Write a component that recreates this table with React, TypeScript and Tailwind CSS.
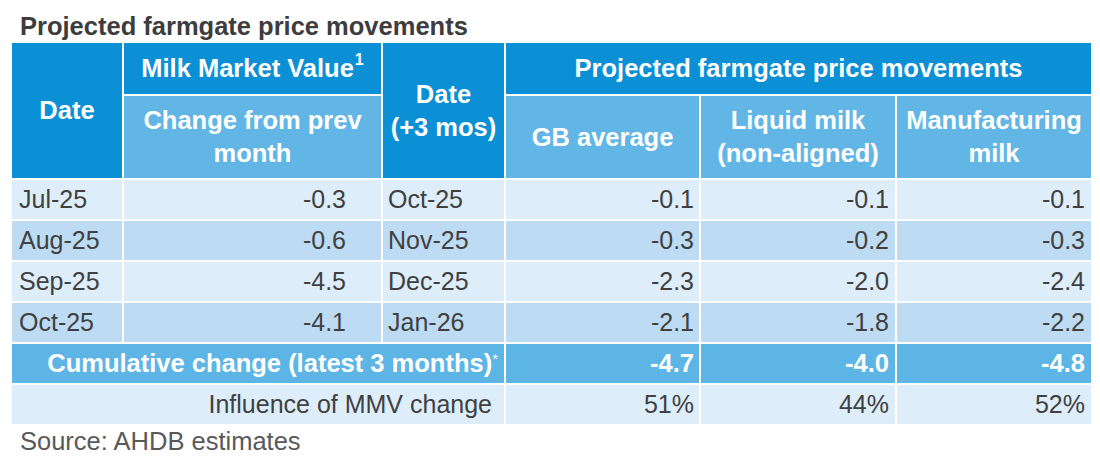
const rows = [
  { d: "Jul-25", mmv: "-0.3", d3: "Oct-25", gb: "-0.1", liq: "-0.1", man: "-0.1" },
  { d: "Aug-25", mmv: "-0.6", d3: "Nov-25", gb: "-0.3", liq: "-0.2", man: "-0.3" },
  { d: "Sep-25", mmv: "-4.5", d3: "Dec-25", gb: "-2.3", liq: "-2.0", man: "-2.4" },
  { d: "Oct-25", mmv: "-4.1", d3: "Jan-26", gb: "-2.1", liq: "-1.8", man: "-2.2" },
];

export default function App() {
  return (
    <div
      className="w-[1100px] h-[460px] bg-white pl-[12px] pt-[12px] text-[#404040]"
      style={{ fontFamily: '"Liberation Sans", Arial, sans-serif' }}
    >
      <h1 className="pl-[8px] text-[25.5px] leading-[29px] font-bold text-[#3d3d3d]">
        Projected farmgate price movements
      </h1>

      <div className="mt-[2px] grid w-[1079px] grid-cols-[110px_257px_121px_193px_194px_194px] grid-rows-[51px_82px_repeat(6,39px)] gap-[2px] bg-white text-[25px]">
        {/* header */}
        <div className="row-span-2 flex items-center justify-center bg-[#0b8fd5] text-[25.5px] font-bold text-white">
          Date
        </div>
        <div className="flex items-center justify-center bg-[#0b8fd5] text-[25.5px] font-bold text-white">
          <span>
            Milk Market Value
            <span className="relative -top-[12px] ml-[1px] text-[16px]">1</span>
          </span>
        </div>
        <div className="row-span-2 flex items-center justify-center bg-[#0b8fd5] text-center text-[25.5px] font-bold leading-[33px] text-white">
          Date
          <br />
          (+3 mos)
        </div>
        <div className="col-span-3 flex items-center justify-center bg-[#0b8fd5] text-[25.5px] font-bold text-white">
          Projected farmgate price movements
        </div>
        <div className="flex items-center justify-center bg-[#62b6e6] text-center text-[25.5px] font-bold leading-[33px] text-white">
          Change from prev
          <br />
          month
        </div>
        <div className="flex items-center justify-center bg-[#62b6e6] text-[25.5px] font-bold text-white">
          GB average
        </div>
        <div className="flex items-center justify-center bg-[#62b6e6] text-center text-[25.5px] font-bold leading-[33px] text-white">
          Liquid milk
          <br />
          (non-aligned)
        </div>
        <div className="flex items-center justify-center bg-[#62b6e6] text-center text-[25.5px] font-bold leading-[33px] text-white">
          Manufacturing
          <br />
          milk
        </div>

        {/* body */}
        {rows.map((r, i) => {
          const bg = i % 2 === 0 ? "bg-[#ddeefa]" : "bg-[#bddcf3]";
          return [
            <div key={r.d + "a"} className={`${bg} flex items-center pl-[7px]`}>{r.d}</div>,
            <div key={r.d + "b"} className={`${bg} flex items-center justify-end pr-[35px]`}>{r.mmv}</div>,
            <div key={r.d + "c"} className={`${bg} flex items-center pl-[5px]`}>{r.d3}</div>,
            <div key={r.d + "d"} className={`${bg} flex items-center justify-end pr-[5px]`}>{r.gb}</div>,
            <div key={r.d + "e"} className={`${bg} flex items-center justify-end pr-[6px]`}>{r.liq}</div>,
            <div key={r.d + "f"} className={`${bg} flex items-center justify-end pr-[6px]`}>{r.man}</div>,
          ];
        })}

        {/* cumulative */}
        <div className="col-span-3 flex items-center justify-end bg-[#5db5e6] pr-[6px] text-[25.5px] font-bold text-white">
          <span>
            Cumulative change (latest 3 months)
            <span className="relative -top-[8px] text-[15px] font-normal">*</span>
          </span>
        </div>
        <div className="flex items-center justify-end bg-[#5db5e6] pr-[5px] text-[25.5px] font-bold text-white">-4.7</div>
        <div className="flex items-center justify-end bg-[#5db5e6] pr-[6px] text-[25.5px] font-bold text-white">-4.0</div>
        <div className="flex items-center justify-end bg-[#5db5e6] pr-[6px] text-[25.5px] font-bold text-white">-4.8</div>

        {/* influence */}
        <div className="col-span-3 flex items-center justify-end bg-[#ddeefa] pr-[12px]">
          Influence of MMV change
        </div>
        <div className="flex items-center justify-end bg-[#ddeefa] pr-[5px]">51%</div>
        <div className="flex items-center justify-end bg-[#ddeefa] pr-[6px]">44%</div>
        <div className="flex items-center justify-end bg-[#ddeefa] pr-[6px]">52%</div>
      </div>

      <p className="mt-[3px] pl-[8px] text-[25.5px] leading-[29px] text-[#595959]">
        Source: AHDB estimates
      </p>
    </div>
  );
}
